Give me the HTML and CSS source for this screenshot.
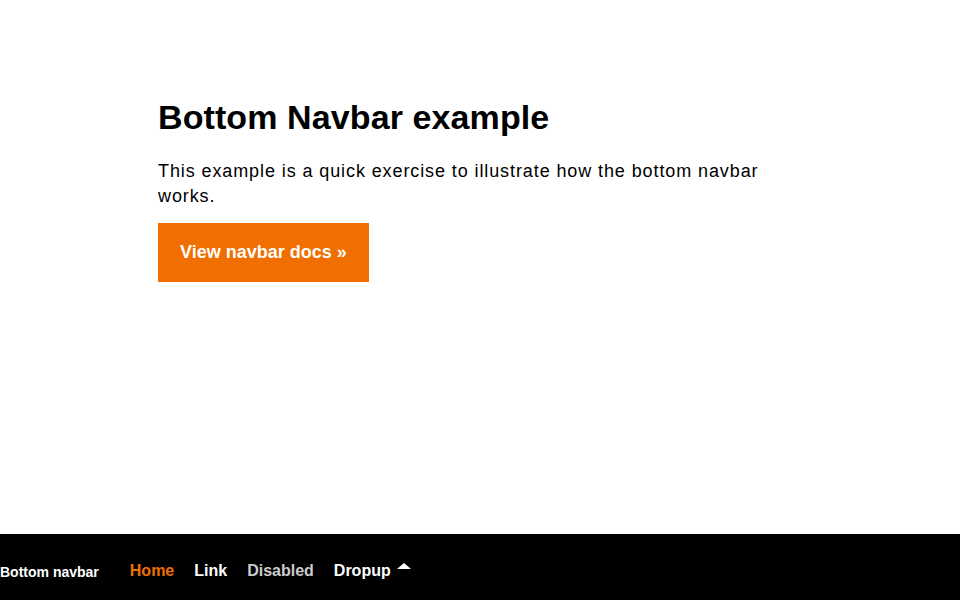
FILE: index.html
```html
<!DOCTYPE html>
<html lang="en">
<head>
<meta charset="utf-8">
<title>Bottom navbar example</title>
<link rel="stylesheet" href="styles.css">
</head>
<body>
<main class="container">
  <h1 class="title">Bottom Navbar example</h1>
  <p class="lead">This example is a quick exercise to illustrate how the bottom navbar works.</p>
  <a class="btn" href="#">View navbar docs »</a>
</main>
<nav class="navbar">
  <a class="brand" href="#">Bottom navbar</a>
  <ul class="nav">
    <li><a class="nav-link active" href="#">Home</a></li>
    <li><a class="nav-link" href="#">Link</a></li>
    <li><span class="nav-link disabled">Disabled</span></li>
    <li><a class="nav-link dropup" href="#">Dropup <span class="caret"></span></a></li>
  </ul>
</nav>
</body>
</html>
```
FILE: styles.css
```css
* { box-sizing: border-box; }
html, body { margin: 0; padding: 0; }
body {
  font-family: "Liberation Sans", Arial, sans-serif;
  color: #000;
  background: #fff;
  height: 600px;
}
.container {
  width: 644px;
  margin: 0 auto;
  padding-top: 99px;
}
.title {
  font-size: 34px;
  font-weight: 700;
  line-height: 1.1;
  letter-spacing: 0.1px;
  margin: 0 0 23px;
}
.lead {
  font-size: 18px;
  line-height: 25px;
  letter-spacing: 0.9px;
  margin: 0 0 14px;
}
.btn {
  display: inline-block;
  background: #f16e00;
  color: #fff;
  font-weight: 700;
  font-size: 18px;
  line-height: 20px;
  padding: 19px 22px 20px;
  text-decoration: none;
}
.navbar {
  position: fixed;
  left: 0;
  right: 0;
  bottom: 0;
  height: 66px;
  background: #000;
  display: flex;
  align-items: center;
  padding-top: 7px;
}
.brand {
  color: #fff;
  font-weight: 700;
  font-size: 14px;
  text-decoration: none;
  margin-right: 21px;
  padding-top: 3px;
}
.nav {
  list-style: none;
  margin: 0;
  padding: 0;
  display: flex;
}
.nav-link {
  display: flex;
  align-items: center;
  padding: 0 10px;
  color: #fff;
  font-weight: 700;
  font-size: 16px;
  text-decoration: none;
}
.nav-link.active { color: #f16e00; }
.nav-link.disabled { color: #ccc; }
.caret {
  display: inline-block;
  width: 0;
  height: 0;
  margin-left: 6px;
  margin-top: -10px;
  border-left: 7px solid transparent;
  border-right: 7px solid transparent;
  border-bottom: 6px solid #fff;
}
```
